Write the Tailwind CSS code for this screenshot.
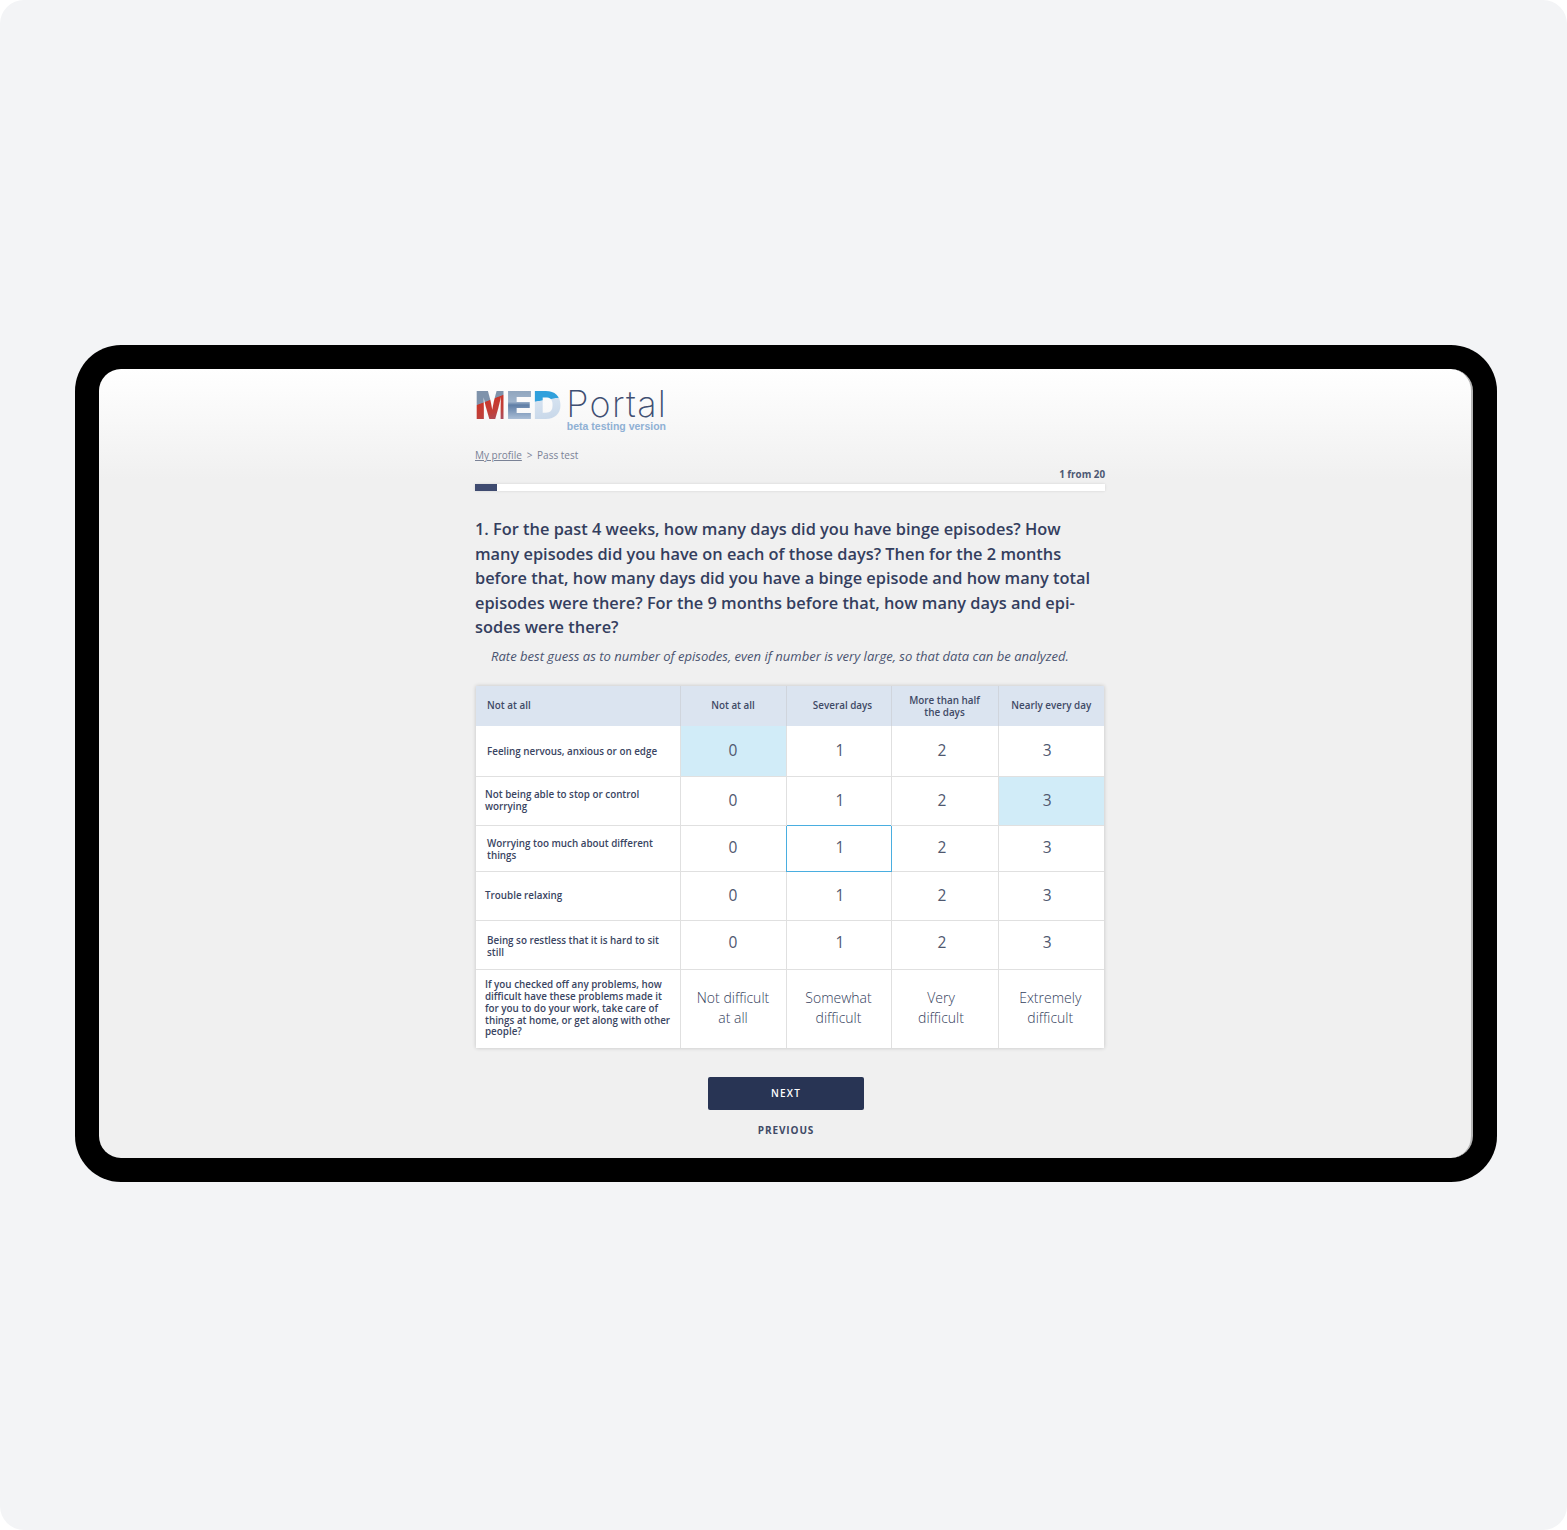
<!DOCTYPE html>
<html lang="en">
  <head>
    <meta charset="UTF-8" />
    <title>MED Portal - Pass test</title>
    <script src="https://cdn.jsdelivr.net/npm/@tailwindcss/browser@4"></script>
  </head>
  <body class="bg-white">
    <div class="w-[1567px] h-[1530px] bg-[#f3f4f6] rounded-[24px] pt-[345px] pl-[75px] font-['Open_Sans',sans-serif]">
      <div class="w-[1422px] h-[837px] bg-black rounded-[46px] p-[24px]">
        <div class="w-[1374px] h-[789px] rounded-[22px] overflow-hidden bg-[linear-gradient(#ffffff_0px,#f0f0f0_110px)] border-r-2 border-[#b5b5b5] pl-[376px] pt-[20px]">
          <div class="w-[630px]">

            <!-- logo -->
            <div class="flex items-start h-[43px]">
              <div class="flex gap-[1px] font-['Inter',sans-serif] font-black text-[38px] leading-[32px] h-[32px] w-[91px]">
                <span class="block w-[30px] scale-x-[.95] origin-left bg-[linear-gradient(160deg,#7f93ab_38%,#c9372c_40%,#c0403a_70%,#a3536a_100%)] bg-clip-text text-transparent">M</span>
                <span class="block w-[26px] scale-x-[1.15] origin-left bg-[linear-gradient(180deg,#8da3bb_0%,#9fb4cc_40%,#5f7ea6_50%,#b4c6dc_100%)] bg-clip-text text-transparent">E</span>
                <span class="block w-[28px] scale-x-[1.05] origin-left bg-[linear-gradient(170deg,#30a0dc_34%,#d5e2f0_36%,#c6d6e8_100%)] bg-clip-text text-transparent">D</span>
              </div>
              <div class="flex flex-col items-end w-[100px]">
                <span class="font-['Inter',sans-serif] font-extralight text-[36px] leading-[30px] tracking-[1.2px] -mr-[1px] text-[#3f4f72]">Portal</span>
                <span class="font-['Liberation_Sans',sans-serif] font-bold text-[10.5px] leading-[12px] mt-[1px] text-[#8fb0d4]">beta testing version</span>
              </div>
            </div>

            <!-- breadcrumbs -->
            <div class="mt-[16px] flex items-center text-[10px] leading-[14px] text-[#7a8296]">
              <a href="#" class="underline">My profile</a>
              <span class="ml-[5px] mr-[4.5px]">&gt;</span>
              <span>Pass test</span>
            </div>

            <div class="mt-[6px] text-right text-[9.8px] leading-[14px] font-bold text-[#4d5874]">1 from 20</div>

            <!-- progress -->
            <div class="mt-[2px] h-[7px] bg-white shadow-[0_0_3px_rgba(0,0,0,0.12)]">
              <div class="w-[22px] h-[7px] bg-[#3f4b70]"></div>
            </div>

            <h1 class="mt-[26px] text-[16.36px] leading-[24.5px] font-semibold text-[#343e5e]">
              1. For the past 4 weeks, how many days did you have binge episodes? How<br />
              many episodes did you have on each of those days? Then for the 2 months<br />
              before that, how many days did you have a binge episode and how many total<br />
              episodes were there? For the 9 months before that, how many days and epi-<br />
              sodes were there?
            </h1>
            <p class="mt-[7px] pl-[16px] text-[13.05px] leading-[18px] italic text-[#4a5470]">Rate best guess as to number of episodes, even if number is very large, so that data can be analyzed.</p>

            <!-- questions table -->
            <table class="mt-[21px] ml-[1px] w-[628px] table-fixed border-collapse shadow-[0_0_4px_rgba(0,0,0,0.2)] bg-white text-[#3a4562]">
              <colgroup>
                <col class="w-[204px]" />
                <col class="w-[106px]" />
                <col class="w-[105px]" />
                <col class="w-[107px]" />
                <col class="w-[106px]" />
              </colgroup>
              <thead>
                <tr class="h-[40px] bg-[#dbe4f0] text-[9.9px] leading-[11.5px] font-semibold text-[#3f4a66]">
                  <th class="font-semibold text-left pl-[11px] border-r border-[#d0d5dd]">Not at all</th>
                  <th class="font-semibold border-r border-[#d0d5dd]">Not at all</th>
                  <th class="font-semibold border-r border-[#d0d5dd] pl-[8px]">Several days</th>
                  <th class="font-semibold border-r border-[#d0d5dd] pt-[2px]">More than half<br />the days</th>
                  <th class="font-semibold">Nearly every day</th>
                </tr>
              </thead>
              <tbody class="text-[15.5px] font-normal text-center text-[#4f586f]">
                <tr class="h-[51px] border-b border-[#e0e0e0]">
                  <td class="pl-[11px] pt-[2px] text-left text-[9.83px] leading-[11.7px] font-semibold text-[#3a4562]">Feeling nervous, anxious or on edge</td>
                  <td class="pb-[1px] bg-[#d1ecf8] border-l border-[#e0e0e0]">0</td>
                  <td class="pb-[1px] pl-[3px] border-l border-[#e0e0e0]">1</td>
                  <td class="pb-[1px] pr-[5px] border-l border-[#e0e0e0]">2</td>
                  <td class="pb-[1px] pr-[8px] border-l border-[#e0e0e0]">3</td>
                </tr>
                <tr class="h-[49px] border-b border-[#e0e0e0]">
                  <td class="pl-[9px] text-left text-[9.83px] leading-[11.7px] font-semibold text-[#3a4562]">Not being able to stop or control<br />worrying</td>
                  <td class="pb-[1px] border-l border-[#e0e0e0]">0</td>
                  <td class="pb-[1px] pl-[3px] border-l border-[#e0e0e0]">1</td>
                  <td class="pb-[1px] pr-[5px] border-l border-[#e0e0e0]">2</td>
                  <td class="pb-[1px] pr-[8px] bg-[#d1ecf8] border-l border-[#e0e0e0]">3</td>
                </tr>
                <tr class="h-[46px] border-b border-[#e0e0e0]">
                  <td class="pl-[11px] pt-[2px] text-left text-[9.83px] leading-[11.7px] font-semibold text-[#3a4562]">Worrying too much about different<br />things</td>
                  <td class="pb-[2px] border-l border-[#e0e0e0]">0</td>
                  <td class="pb-[2px] pl-[3px] border border-[#4aaee0]">1</td>
                  <td class="pb-[2px] pr-[5px] border-l border-[#e0e0e0]">2</td>
                  <td class="pb-[2px] pr-[8px] border-l border-[#e0e0e0]">3</td>
                </tr>
                <tr class="h-[49px] border-b border-[#e0e0e0]">
                  <td class="pl-[9px] text-left text-[9.83px] leading-[11.7px] font-semibold text-[#3a4562]">Trouble relaxing</td>
                  <td class="pb-[1px] border-l border-[#e0e0e0]">0</td>
                  <td class="pb-[1px] pl-[3px] border-l border-[#e0e0e0]">1</td>
                  <td class="pb-[1px] pr-[5px] border-l border-[#e0e0e0]">2</td>
                  <td class="pb-[1px] pr-[8px] border-l border-[#e0e0e0]">3</td>
                </tr>
                <tr class="h-[49px] border-b border-[#e0e0e0]">
                  <td class="pl-[11px] pt-[4px] text-left text-[9.83px] leading-[11.7px] font-semibold text-[#3a4562]">Being so restless that it is hard to sit<br />still</td>
                  <td class="pb-[5px] border-l border-[#e0e0e0]">0</td>
                  <td class="pb-[5px] pl-[3px] border-l border-[#e0e0e0]">1</td>
                  <td class="pb-[5px] pr-[5px] border-l border-[#e0e0e0]">2</td>
                  <td class="pb-[5px] pr-[8px] border-l border-[#e0e0e0]">3</td>
                </tr>
                <tr class="h-[78px] text-[14px] leading-[20px] font-light text-[#333e5c]">
                  <td class="pl-[9px] text-left text-[9.83px] leading-[11.7px] font-semibold text-[#3a4562]">If you checked off any problems, how<br />difficult have these problems made it<br />for you to do your work, take care of<br />things at home, or get along with other<br />people?</td>
                  <td class="pb-[2px] border-l border-[#e0e0e0]">Not difficult<br />at all</td>
                  <td class="pb-[2px] border-l border-[#e0e0e0]">Somewhat<br />difficult</td>
                  <td class="pb-[2px] pr-[7px] border-l border-[#e0e0e0]">Very<br />difficult</td>
                  <td class="pb-[2px] pr-[2px] border-l border-[#e0e0e0]">Extremely<br />difficult</td>
                </tr>
              </tbody>
            </table>

            <!-- buttons -->
            <div class="mt-[29px] flex flex-col items-center pr-[8px]">
              <button class="w-[156px] h-[33px] rounded-[2px] bg-[#283454] text-white text-[10px] font-semibold tracking-[1.2px]">NEXT</button>
              <button class="mt-[13px] text-[10px] leading-[14px] font-bold tracking-[0.9px] text-[#3f4a66]">PREVIOUS</button>
            </div>
          </div>
        </div>
      </div>
    </div>
  </body>
</html>
